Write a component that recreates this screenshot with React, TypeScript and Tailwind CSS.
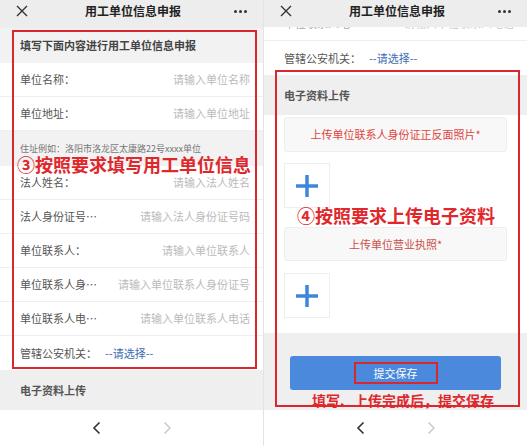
const font = { fontFamily: '"Noto Sans CJK SC", "Noto Sans", sans-serif' };

function Header({ h }: { h: string }) {
  return (
    <div className={`${h} bg-[#ededed] shrink-0`}>
      <div className="h-[22px] flex items-center justify-between px-[16px]">
        <svg width="12" height="12" viewBox="0 0 12 12">
          <path d="M1 1 L11 11 M11 1 L1 11" stroke="#333" strokeWidth="1.4" />
        </svg>
        <span className="text-[12px] font-bold text-[#222] ml-[4px]">用工单位信息申报</span>
        <span className="flex gap-[2px]">
          <i className="w-[3px] h-[3px] rounded-full bg-[#333]" />
          <i className="w-[3px] h-[3px] rounded-full bg-[#333]" />
          <i className="w-[3px] h-[3px] rounded-full bg-[#333]" />
        </span>
      </div>
    </div>
  );
}

function Row({ label, placeholder, faded }: { label: string; placeholder: string; faded?: boolean }) {
  return (
    <div className="h-[34px] shrink-0 flex items-center justify-between pl-5 pr-[13px] border-b border-[#efefef] bg-white">
      <span className={`text-[11px] ${faded ? "text-[#aaa]" : "text-[#555]"}`}>{label}</span>
      <span className={`text-[11px] ${faded ? "text-[#ccc]" : "text-[#bbb]"}`}>{placeholder}</span>
    </div>
  );
}

function SelectRow() {
  return (
    <div className="h-[34px] shrink-0 flex items-center pl-5 bg-white">
      <span className="text-[11px] text-[#555]">管辖公安机关：</span>
      <span className="text-[11px] text-[#3c6cb4] ml-[8px]">--请选择--</span>
    </div>
  );
}

function Nav() {
  return (
    <div className="h-[36px] shrink-0 bg-white flex items-center justify-center gap-[60px]">
      <svg width="10" height="14" viewBox="0 0 10 14">
        <path d="M7.5 1.5 L2 7 L7.5 12.5" fill="none" stroke="#333" strokeWidth="1.6" />
      </svg>
      <svg width="10" height="14" viewBox="0 0 10 14">
        <path d="M2.5 1.5 L8 7 L2.5 12.5" fill="none" stroke="#ccc" strokeWidth="1.6" />
      </svg>
    </div>
  );
}

function Plus() {
  return (
    <div className="w-[46px] h-[45px] border border-[#eeeeee] bg-white flex items-center justify-center">
      <svg width="24" height="24" viewBox="0 0 24 24">
        <path d="M12 1 V23 M1 12 H23" stroke="#3f86d8" strokeWidth="3.5" />
      </svg>
    </div>
  );
}

export default function App() {
  return (
    <div className="w-[527px] h-[446px] flex bg-white overflow-hidden" style={font}>
      {/* left screen */}
      <div className="relative w-[264px] h-[446px] flex flex-col border-r border-[#e3e3e3] overflow-hidden">
        <Header h="h-[28px]" />
        <div className="h-[35px] shrink-0 bg-[#f2f2f2] flex items-center px-5">
          <span className="text-[11px] font-bold text-[#444]">填写下面内容进行用工单位信息申报</span>
        </div>
        <Row label="单位名称：" placeholder="请输入单位名称" />
        <Row label="单位地址：" placeholder="请输入单位地址" />
        <div className="h-[35px] shrink-0 bg-[#f2f2f2] px-5 pt-[12px] flex items-start">
          <span className="text-[9px] text-[#777] leading-[11px]">住址例如：洛阳市洛龙区太康路22号xxxx单位</span>
        </div>
        <Row label="法人姓名：" placeholder="请输入法人姓名" />
        <Row label="法人身份证号…" placeholder="请输入法人身份证号码" />
        <Row label="单位联系人：" placeholder="请输入单位联系人" />
        <Row label="单位联系人身…" placeholder="请输入单位联系人身份证号" />
        <Row label="单位联系人电…" placeholder="请输入单位联系人电话" />
        <SelectRow />
        <div className="h-[40px] shrink-0 bg-[#efefef] flex items-center px-5">
          <span className="text-[11px] font-bold text-[#555]">电子资料上传</span>
        </div>
        <Nav />

        <div className="absolute left-[12px] top-[30px] w-[245px] h-[339px] border-2 border-[#d8282e]" />
        <div className="absolute left-[17px] top-[155px] text-[18px] leading-none font-bold text-[#e0282c]">
          ③按照要求填写用工单位信息
        </div>
      </div>

      {/* right screen */}
      <div className="relative flex-1 h-[446px] flex flex-col overflow-hidden">
        <Header h="h-[27px]" />
        <div className="h-[14px] shrink-0 overflow-hidden border-b border-[#efefef]">
          <div className="-mt-[20px]">
            <Row label="单位联系人电…" placeholder="请输入单位联系人电话" faded />
          </div>
        </div>
        <SelectRow />
        <div className="h-[40px] shrink-0 bg-[#efefef] flex items-center px-5">
          <span className="text-[11px] font-bold text-[#555]">电子资料上传</span>
        </div>
        <div className="shrink-0 bg-white px-5 pt-[2px] pb-[15px] flex flex-col">
          <div className="h-[35px] bg-[#f8f8f8] border border-[#eeeeee] rounded-[3px] flex items-center justify-center">
            <span className="text-[11px] text-[#e0453e]">上传单位联系人身份证正反面照片*</span>
          </div>
          <div className="mt-[11px]">
            <Plus />
          </div>
          <div className="mt-[19px] h-[34px] bg-[#f8f8f8] border border-[#eeeeee] rounded-[3px] flex items-center justify-center">
            <span className="text-[11px] text-[#c9504a]">上传单位营业执照*</span>
          </div>
          <div className="mt-[12px]">
            <Plus />
          </div>
        </div>
        <div className="flex-1 bg-[#efefef] px-[26px] pt-[23px]">
          <div className="h-[34px] bg-[#4a89dc] rounded-[3px] flex items-center justify-center">
            <span className="border-2 border-[#d8282e] px-[18px] h-[22px] flex items-center text-[11px] text-white">
              提交保存
            </span>
          </div>
        </div>
        <Nav />

        <div className="absolute left-[11px] top-[70px] w-[245px] h-[337px] border-2 border-[#d8282e]" />
        <div className="absolute left-[33px] top-[206px] text-[18px] leading-none font-bold text-[#e0282c]">
          ④按照要求上传电子资料
        </div>
        <div className="absolute left-[48px] top-[393px] text-[14px] leading-none font-bold text-[#e0282c]">
          填写、上传完成后，提交保存
        </div>
      </div>
    </div>
  );
}
